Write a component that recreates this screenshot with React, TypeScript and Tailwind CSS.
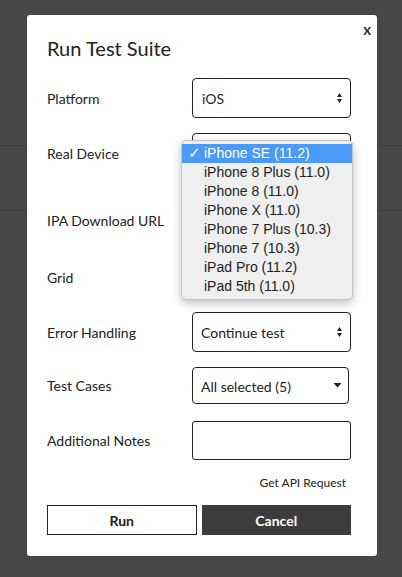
import React from "react";

const devices = [
  "iPhone SE (11.2)",
  "iPhone 8 Plus (11.0)",
  "iPhone 8 (11.0)",
  "iPhone X (11.0)",
  "iPhone 7 Plus (10.3)",
  "iPhone 7 (10.3)",
  "iPad Pro (11.2)",
  "iPad 5th (11.0)",
];

function UpDown() {
  return (
    <svg width="7" height="12" viewBox="0 0 7 12" className="text-[#222]">
      <path d="M3.5 1 L6 5 L1 5 Z" fill="currentColor" />
      <path d="M3.5 11 L6 7 L1 7 Z" fill="currentColor" />
    </svg>
  );
}

function Caret() {
  return (
    <svg width="9" height="5" viewBox="0 0 9 5" className="text-[#222]">
      <path d="M0.5 0 L8.5 0 L4.5 4.5 Z" fill="currentColor" />
    </svg>
  );
}

function Row({
  label,
  h,
  mt,
  children,
}: {
  label: string;
  h: string;
  mt: string;
  children?: React.ReactNode;
}) {
  return (
    <div className={`flex items-center ${h} ${mt}`}>
      <div className="w-[145px] text-[14px] text-[#222]">{label}</div>
      <div className="flex h-full flex-1 items-center">{children}</div>
    </div>
  );
}

export default function App() {
  return (
    <div className="relative h-[577px] w-[402px] overflow-hidden bg-[#474747] font-['Lato','Open_Sans',sans-serif]">
      {/* page lines behind overlay */}
      <div className="absolute left-0 right-0 top-[145px] h-px bg-[#3b3b3b]" />
      <div className="absolute left-0 right-0 top-[210px] h-px bg-[#3b3b3b]" />

      <div className="absolute left-[27px] top-[15px] h-[541px] w-[350px] rounded-[3px] bg-white pl-[20px] pr-[26px]">
        <div className="absolute right-[6px] top-[3px] text-[15px] font-bold text-[#333]">x</div>
        <h1 className="pt-[21px] text-[20px] leading-[24px] text-[#222]">Run Test Suite</h1>

        <Row label="Platform" h="h-[40px]" mt="mt-[18px]">
          <div className="flex h-[40px] w-[159px] items-center justify-between rounded-[4px] border border-[#222] pl-[9px] pr-[7px] text-[14px] text-[#222]">
            <span>iOS</span>
            <UpDown />
          </div>
        </Row>
        <Row label="Real Device" h="h-[40px]" mt="mt-[15px]">
          <div className="h-[40px] w-[159px] rounded-[4px] border border-[#222]" />
        </Row>
        <Row label="IPA Download URL" h="h-[64px]" mt="mt-[15px]" />
        <Row label="Grid" h="h-[40px]" mt="mt-[5px]" />
        <Row label="Error Handling" h="h-[40px]" mt="mt-[15px]">
          <div className="flex h-[40px] w-[159px] items-center justify-between rounded-[4px] border border-[#222] pl-[8px] pr-[7px] text-[14px] text-[#222]">
            <span>Continue test</span>
            <UpDown />
          </div>
        </Row>
        <Row label="Test Cases" h="h-[37px]" mt="mt-[15px]">
          <div className="flex h-[37px] w-[157px] items-center justify-between rounded-[4px] border border-[#222] pl-[8px] pr-[6px] text-[14px] text-[#222]">
            <span className="pt-[2px]">All selected (5)</span>
            <Caret />
          </div>
        </Row>
        <Row label="Additional Notes" h="h-[39px]" mt="mt-[17px]">
          <div className="h-[39px] w-[159px] rounded-[3px] border border-[#222]" />
        </Row>

        <div className="mt-[15px] flex justify-end pr-[5px] text-[12px] leading-[15px] text-[#222]">
          Get API Request
        </div>

        <div className="mt-[15px] flex gap-[5px]">
          <button className="h-[30px] w-[150px] border border-[#222] bg-white text-[14px] font-bold text-[#222]">
            Run
          </button>
          <button className="h-[30px] w-[150px] bg-[#3c3c3c] text-[14px] font-bold text-white">
            Cancel
          </button>
        </div>
      </div>

      {/* open native dropdown */}
      <div className="absolute left-[181px] top-[140px] w-[172px] rounded-[5px] border border-[#c4c4c4] bg-[#efefef] py-[3px] font-['Liberation_Sans','DejaVu_Sans',sans-serif] text-[14px] shadow-[0_3px_10px_rgba(0,0,0,0.25)]">
        {devices.map((d, i) => (
          <div
            key={d}
            className={`flex h-[19px] items-center ${i === 0 ? "bg-[#4a9af9] text-white" : "text-[#222]"}`}
          >
            <span className="w-[22px] pl-[6px] text-[15px] font-bold">{i === 0 ? "✓" : ""}</span>
            <span>{d}</span>
          </div>
        ))}
      </div>
    </div>
  );
}
